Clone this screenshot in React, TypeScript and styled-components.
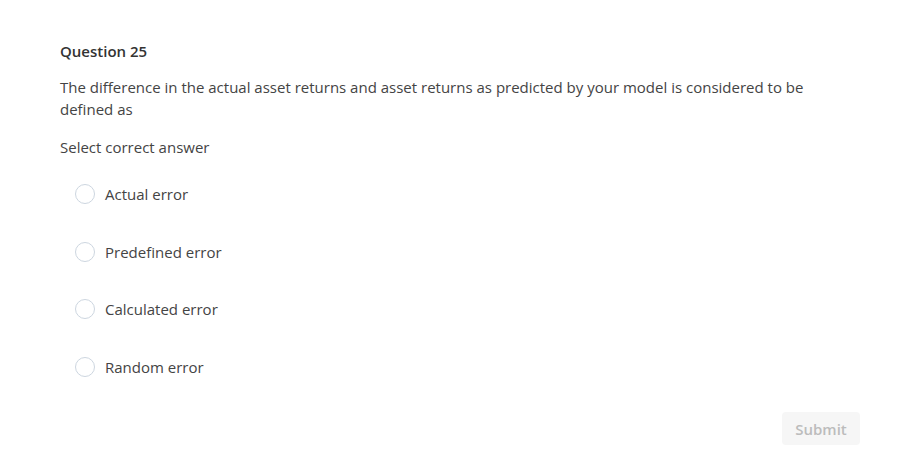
import React from 'react';
import styled, { createGlobalStyle } from 'styled-components';

const GlobalStyle = createGlobalStyle`
  body {
    margin: 0;
    background: #fff;
    font-family: "Open Sans", "Liberation Sans", sans-serif;
    color: #333;
  }
`;

const options = ['Actual error', 'Predefined error', 'Calculated error', 'Random error'];

function App() {
  return (
    <>
      <GlobalStyle />
      <Page>
        <Title>Question 25</Title>
        <Prompt>
          The difference in the actual asset returns and asset returns as predicted by your model is
          considered to be defined as
        </Prompt>
        <Hint>Select correct answer</Hint>
        <OptionList>
          {options.map(o => (
            <Option key={o}>
              <Radio />
              <span>{o}</span>
            </Option>
          ))}
        </OptionList>
        <Footer>
          <SubmitButton disabled>Submit</SubmitButton>
        </Footer>
      </Page>
    </>
  );
}

export default App;

const Page = styled.div`
  width: 919px;
  height: 472px;
  box-sizing: border-box;
  padding: 40px 59px 0 60px;
`;

const Title = styled.div`
  font-size: 15px;
  font-weight: 600;
  line-height: 22px;
  color: #333;
`;

const Prompt = styled.div`
  margin-top: 14px;
  width: 760px;
  font-size: 15px;
  line-height: 22px;
  color: #444;
`;

const Hint = styled.div`
  margin-top: 16px;
  font-size: 15px;
  line-height: 22px;
  color: #444;
`;

const OptionList = styled.div`
  margin-top: 25px;
  padding-left: 15px;
  display: flex;
  flex-direction: column;
  gap: 35.7px;
`;

const Option = styled.label`
  display: flex;
  align-items: center;
  gap: 10px;
  height: 22px;
  font-size: 15px;
  color: #444;
`;

const Radio = styled.span`
  width: 20px;
  height: 20px;
  border-radius: 50%;
  border: 1px solid #cdd6e0;
  box-sizing: border-box;
  background: #fff;
`;

const Footer = styled.div`
  display: flex;
  justify-content: flex-end;
  margin-top: 34px;
`;

const SubmitButton = styled.button`
  width: 78px;
  height: 33px;
  border: none;
  border-radius: 4px;
  background: #f6f6f6;
  color: #bcbcbc;
  font-family: inherit;
  font-size: 15px;
  font-weight: 600;
`;
